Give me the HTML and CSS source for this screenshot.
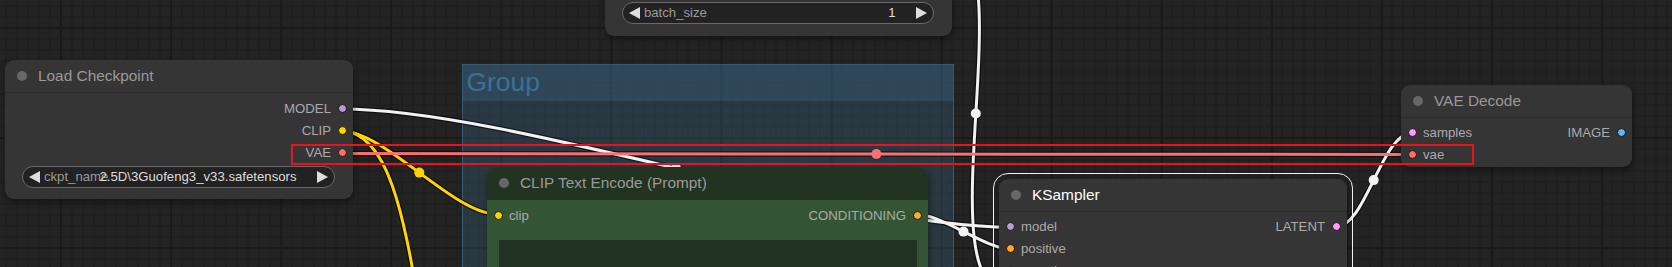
FILE: index.html
```html
<!DOCTYPE html>
<html lang="en">
<head>
    <meta charset="UTF-8">
    <title>ComfyUI Graph</title>
    <link rel="stylesheet" href="styles.css">
</head>
<body>
    <div class="canvas">
        <div class="group">
            <div class="group-title">Group</div>
        </div>

        <svg class="wires" width="1672" height="267" viewBox="0 0 1672 267">
            <g class="shadow">
                <path d="M341 109 C511 109 840.7 227.3 1010.7 227.3"/>
                <path d="M341 131 C385.3 131 453.2 214.3 497.5 214.3"/>
                <path d="M341 131 C436.6 131 401.4 480 497.5 480"/>
                <path d="M341 153.5 C608.7 153.5 1144 154.5 1411.7 154.5"/>
                <path d="M941 -66 C1032.5 -66 919.2 293 1010.7 293"/>
                <path d="M916.4 214.3 C941.5 214.3 985.6 249 1010.7 249"/>
                <path d="M916.4 480 C973.7 480 953.4 271 1010.7 271"/>
                <path d="M1335.7 227 C1365.9 227 1381.5 133.2 1411.7 133.2"/>
            </g>
            <g class="link white">
                <path d="M341 109 C511 109 840.7 227.3 1010.7 227.3"/>
                <path d="M941 -66 C1032.5 -66 919.2 293 1010.7 293"/>
                <path d="M916.4 214.3 C941.5 214.3 985.6 249 1010.7 249"/>
                <path d="M916.4 480 C973.7 480 953.4 271 1010.7 271"/>
                <path d="M1335.7 227 C1365.9 227 1381.5 133.2 1411.7 133.2"/>
                <circle cx="676" cy="168.2" r="5"/>
                <circle cx="975.8" cy="113.5" r="5"/>
                <circle cx="963.5" cy="231.6" r="5"/>
                <circle cx="1373.7" cy="180.1" r="5"/>
            </g>
            <g class="link yellow">
                <path d="M341 131 C385.3 131 453.2 214.3 497.5 214.3"/>
                <path d="M341 131 C436.6 131 401.4 480 497.5 480"/>
                <circle cx="419.3" cy="172.6" r="5"/>
            </g>
            <g class="link red">
                <path d="M341 153.5 C608.7 153.5 1144 154.5 1411.7 154.5"/>
                <circle cx="876.4" cy="154" r="5"/>
            </g>
        </svg>

        <!-- Empty Latent Image (cut off at top) -->
        <div class="node latent-node">
            <div class="widget">
                <svg class="arrow" viewBox="0 0 11 12"><path d="M11 0 L0 6 L11 12 Z"/></svg>
                <div class="widget-text">
                    <span class="w-label">batch_size</span>
                    <span class="w-value">1</span>
                </div>
                <svg class="arrow" viewBox="0 0 11 12"><path d="M0 0 L11 6 L0 12 Z"/></svg>
            </div>
        </div>

        <div class="node ckpt-node">
            <div class="node-title"><span class="title-dot"></span>Load Checkpoint</div>
            <div class="node-body">
                <div class="slot-row end">
                    <div class="slot out">MODEL<span class="dot c-model"></span></div>
                </div>
                <div class="slot-row end">
                    <div class="slot out">CLIP<span class="dot c-clip"></span></div>
                </div>
                <div class="slot-row end">
                    <div class="slot out">VAE<span class="dot c-vae"></span></div>
                </div>
                <div class="widget">
                    <svg class="arrow" viewBox="0 0 11 12"><path d="M11 0 L0 6 L11 12 Z"/></svg>
                    <div class="widget-text">
                        <span class="w-label">ckpt_name</span>
                        <span class="w-value">2.5D\3Guofeng3_v33.safetensors</span>
                    </div>
                    <svg class="arrow" viewBox="0 0 11 12"><path d="M0 0 L11 6 L0 12 Z"/></svg>
                </div>
            </div>
        </div>

        <div class="node clip-node green">
            <div class="node-title"><span class="title-dot"></span>CLIP Text Encode (Prompt)</div>
            <div class="node-body">
                <div class="slot-row">
                    <div class="slot in"><span class="dot c-clip"></span>clip</div>
                    <div class="slot out">CONDITIONING<span class="dot c-cond"></span></div>
                </div>
                <div class="textarea"></div>
            </div>
        </div>

        <div class="node ksampler-node selected">
            <div class="node-title"><span class="title-dot"></span>KSampler</div>
            <div class="node-body">
                <div class="slot-row">
                    <div class="slot in"><span class="dot c-model"></span>model</div>
                    <div class="slot out">LATENT<span class="dot c-latent"></span></div>
                </div>
                <div class="slot-row">
                    <div class="slot in"><span class="dot c-cond"></span>positive</div>
                </div>
                <div class="slot-row">
                    <div class="slot in"><span class="dot c-cond"></span>negative</div>
                </div>
            </div>
        </div>

        <div class="node decode-node">
            <div class="node-title"><span class="title-dot"></span>VAE Decode</div>
            <div class="node-body">
                <div class="slot-row">
                    <div class="slot in"><span class="dot c-latent"></span>samples</div>
                    <div class="slot out">IMAGE<span class="dot c-image"></span></div>
                </div>
                <div class="slot-row">
                    <div class="slot in"><span class="dot c-vae"></span>vae</div>
                </div>
            </div>
        </div>

        <div class="highlight"></div>
    </div>
</body>
</html>
```

FILE: styles.css
```css
body {
    margin: 0;
    background: #222;
    font-family: "Liberation Sans", Arial, sans-serif;
    overflow: hidden;
}
.canvas {
    position: relative;
    width: 1672px;
    height: 267px;
    overflow: hidden;
    background-color: #232323;
    background-image:
        linear-gradient(90deg, #1a1a1a 2px, transparent 2px),
        linear-gradient(#1a1a1a 2px, transparent 2px),
        linear-gradient(90deg, #1e1e1e 1px, transparent 1px),
        linear-gradient(#1e1e1e 1px, transparent 1px);
    background-size: 110.1px 110.1px, 110.1px 110.1px, 11.01px 11.01px, 11.01px 11.01px;
    background-position: 60px 0, 0 27px, 5.5px 0, 0 5.5px;
}

/* group box */
.group {
    position: absolute;
    left: 462px;
    top: 64px;
    width: 492px;
    height: 260px;
    box-sizing: border-box;
    background: rgba(63, 120, 158, 0.25);
    border: 1px solid rgba(63, 120, 158, 0.55);
}
.group-title {
    height: 36px;
    line-height: 34px;
    padding-left: 3.5px;
    background: rgba(63, 120, 158, 0.25);
    color: #3a7097;
    font-size: 26.4px;
}

/* wires */
.wires {
    position: absolute;
    left: 0;
    top: 0;
    overflow: visible;
}
.wires path {
    fill: none;
}
.shadow path {
    stroke: rgba(0, 0, 0, 0.55);
    stroke-width: 5.5;
}
.link path { stroke-width: 3; }
.white path { stroke: #f2f2f2; }
.white circle { fill: #f2f2f2; }
.yellow path { stroke: #ffd500; }
.yellow circle { fill: #ffd500; }
.red path { stroke: #ff6e6e; }
.red circle { fill: #ff6e6e; }

/* nodes */
.node {
    position: absolute;
    background: #353535;
    border-radius: 9px;
    box-shadow: 1px 3px 6px rgba(0, 0, 0, 0.4);
    color: #aaa;
}
.node-title {
    height: 33px;
    box-sizing: border-box;
    display: flex;
    align-items: center;
    gap: 11px;
    padding-left: 12px;
    border-bottom: 1px solid #2c2c2c;
    border-radius: 9px 9px 0 0;
    font-size: 15.4px;
    color: #999;
}
.title-dot {
    width: 10px;
    height: 10px;
    border-radius: 50%;
    background: #676767;
}
.node-body {
    padding-top: 4.4px;
}
.slot-row {
    height: 22px;
    display: flex;
    align-items: center;
    justify-content: space-between;
    font-size: 13.2px;
}
.slot-row.end {
    justify-content: flex-end;
}
.slot {
    display: flex;
    align-items: center;
    gap: 6.5px;
}
.slot.in { padding-left: 6.5px; }
.slot.out { padding-right: 6.5px; }
.dot {
    width: 9px;
    height: 9px;
    box-sizing: border-box;
    border-radius: 50%;
    border: 1px solid #151515;
}
.c-model { background: #b39ddb; }
.c-clip { background: #ffd500; }
.c-vae { background: #ff6e6e; }
.c-cond { background: #ffa931; }
.c-latent { background: #ff9cf9; }
.c-image { background: #64b5f6; }

/* combo / number widget */
.widget {
    height: 22px;
    box-sizing: border-box;
    margin: 2.6px 18px 0 16.5px;
    padding: 0 6px;
    border: 1px solid #686868;
    border-radius: 11px;
    background: #222;
    display: grid;
    grid-template-columns: 11px 1fr 11px;
    column-gap: 4.4px;
    align-items: center;
    font-size: 13.2px;
}
.arrow {
    width: 11px;
    height: 12px;
    fill: #ddd;
}
.widget-text {
    display: grid;
    white-space: nowrap;
}
.widget-text span {
    grid-area: 1 / 1;
}
.w-label {
    color: #999;
    justify-self: start;
}
.w-value {
    color: #ddd;
    justify-self: end;
    margin-right: 16px;
}

.latent-node {
    left: 605px;
    top: -150px;
    width: 347px;
    height: 186px;
    display: flex;
    flex-direction: column;
    justify-content: flex-end;
    padding-bottom: 12.3px;
    box-sizing: border-box;
}
.latent-node .widget {
    margin-top: 0;
}
.ckpt-node {
    left: 5px;
    top: 60px;
    width: 348px;
    height: 139px;
}
.clip-node {
    left: 487px;
    top: 167px;
    width: 441px;
    height: 200px;
}
.green {
    background: #335533;
}
.green .node-title {
    background: #223322;
    border-bottom-color: #223322;
}
.textarea {
    height: 80px;
    margin: 13.6px 11px 0 12px;
    background: #223222;
}
.ksampler-node {
    left: 999px;
    top: 178.5px;
    width: 348px;
    height: 200px;
}
.selected {
    outline: 1.5px solid #f0f0f0;
    outline-offset: 5px;
}
.selected .node-title {
    color: #fff;
}
.decode-node {
    left: 1401px;
    top: 84.5px;
    width: 231px;
    height: 82.5px;
}

/* red selection frame over the VAE link */
.highlight {
    position: absolute;
    left: 291px;
    top: 143.5px;
    width: 1183px;
    height: 21px;
    box-sizing: border-box;
    border: 2px solid #e5141e;
}
```
